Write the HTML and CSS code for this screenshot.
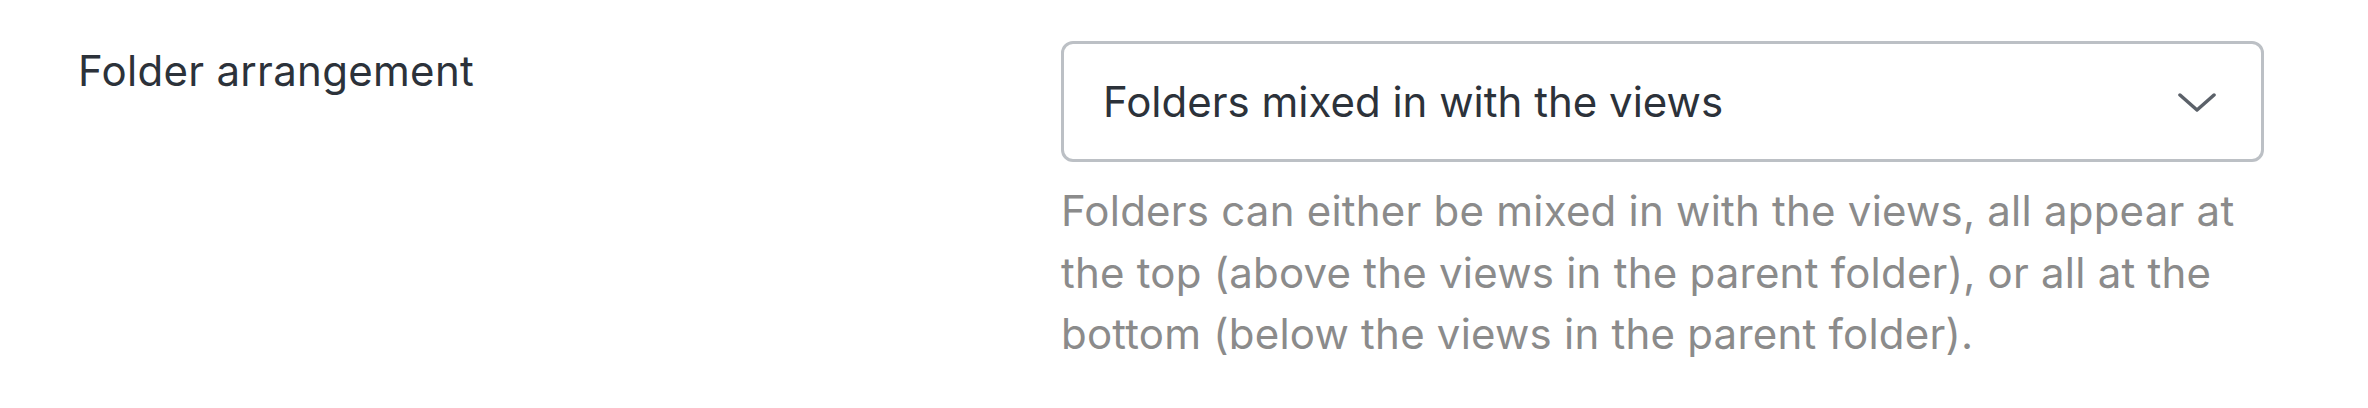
FILE: index.html
```html
<!DOCTYPE html>
<html>
<head>
<meta charset="utf-8">
<link rel="stylesheet" href="styles.css">
</head>
<body>
<div class="row">
  <div class="label">Folder arrangement</div>
  <div class="field">
    <div class="select">
      <span class="value">Folders mixed in with the views</span>
      <svg class="chevron" width="38" height="20" viewBox="0 0 38 20"><polyline points="2,2 19,17 36,2" fill="none" stroke="#5b6169" stroke-width="3.5" stroke-linecap="round" stroke-linejoin="round"/></svg>
    </div>
    <p class="help">Folders can either be mixed in with the views, all appear at the top (above the views in the parent folder), or all at the bottom (below the views in the parent folder).</p>
  </div>
</div>
</body>
</html>
```

FILE: styles.css
```css
html, body {
  margin: 0;
  padding: 0;
  background: #ffffff;
}
body {
  font-family: Inter, "Liberation Sans", sans-serif;
  font-size: 42px;
  color: #2c323a;
}
.row {
  display: grid;
  grid-template-columns: 983px 1203px;
  padding: 41px 0 0 78px;
}
.label {
  line-height: 61.5px;
  margin-top: -1px;
  letter-spacing: 0.3px;
}
.field {
  display: flex;
  flex-direction: column;
}
.select {
  box-sizing: border-box;
  height: 121px;
  border: 3px solid #bcc0c5;
  border-radius: 12px;
  display: flex;
  align-items: center;
  justify-content: space-between;
  padding: 0 45px 0 39px;
}
.value {
  color: #2c323a;
}
.chevron {
  display: block;
  margin-top: 2px;
}
.help {
  margin: 18px 0 0 0;
  color: #8b8b8b;
  line-height: 61.5px;
  letter-spacing: 0.22px;
}
```
